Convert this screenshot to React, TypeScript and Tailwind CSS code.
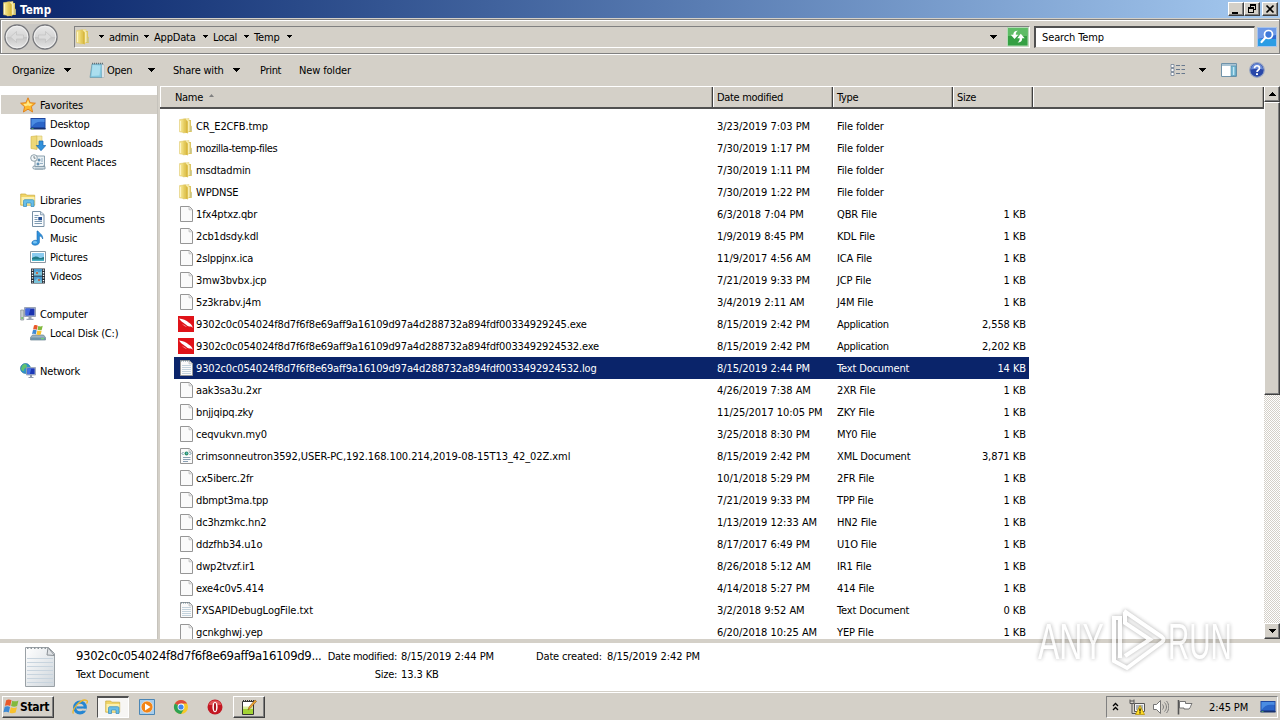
import type { ReactNode } from "react";

type Kind = "folder" | "file" | "falcon" | "text" | "xml";
type Row = [Kind, string, string, string, string];

const rows: Row[] = [
  ["folder", "CR_E2CFB.tmp", "3/23/2019 7:03 PM", "File folder", ""],
  ["folder", "mozilla-temp-files", "7/30/2019 1:17 PM", "File folder", ""],
  ["folder", "msdtadmin", "7/30/2019 1:11 PM", "File folder", ""],
  ["folder", "WPDNSE", "7/30/2019 1:22 PM", "File folder", ""],
  ["file", "1fx4ptxz.qbr", "6/3/2018 7:04 PM", "QBR File", "1 KB"],
  ["file", "2cb1dsdy.kdl", "1/9/2019 8:45 PM", "KDL File", "1 KB"],
  ["file", "2slppjnx.ica", "11/9/2017 4:56 AM", "ICA File", "1 KB"],
  ["file", "3mw3bvbx.jcp", "7/21/2019 9:33 PM", "JCP File", "1 KB"],
  ["file", "5z3krabv.j4m", "3/4/2019 2:11 AM", "J4M File", "1 KB"],
  ["falcon", "9302c0c054024f8d7f6f8e69aff9a16109d97a4d288732a894fdf00334929245.exe", "8/15/2019 2:42 PM", "Application", "2,558 KB"],
  ["falcon", "9302c0c054024f8d7f6f8e69aff9a16109d97a4d288732a894fdf0033492924532.exe", "8/15/2019 2:42 PM", "Application", "2,202 KB"],
  ["text", "9302c0c054024f8d7f6f8e69aff9a16109d97a4d288732a894fdf0033492924532.log", "8/15/2019 2:44 PM", "Text Document", "14 KB"],
  ["file", "aak3sa3u.2xr", "4/26/2019 7:38 AM", "2XR File", "1 KB"],
  ["file", "bnjjqipq.zky", "11/25/2017 10:05 PM", "ZKY File", "1 KB"],
  ["file", "ceqvukvn.my0", "3/25/2018 8:30 PM", "MY0 File", "1 KB"],
  ["xml", "crimsonneutron3592,USER-PC,192.168.100.214,2019-08-15T13_42_02Z.xml", "8/15/2019 2:42 PM", "XML Document", "3,871 KB"],
  ["file", "cx5iberc.2fr", "10/1/2018 5:29 PM", "2FR File", "1 KB"],
  ["file", "dbmpt3ma.tpp", "7/21/2019 9:33 PM", "TPP File", "1 KB"],
  ["file", "dc3hzmkc.hn2", "1/13/2019 12:33 AM", "HN2 File", "1 KB"],
  ["file", "ddzfhb34.u1o", "8/17/2017 6:49 PM", "U1O File", "1 KB"],
  ["file", "dwp2tvzf.ir1", "8/26/2018 5:12 AM", "IR1 File", "1 KB"],
  ["file", "exe4c0v5.414", "4/14/2018 5:27 PM", "414 File", "1 KB"],
  ["text", "FXSAPIDebugLogFile.txt", "3/2/2018 9:52 AM", "Text Document", "0 KB"],
  ["file", "gcnkghwj.yep", "6/20/2018 10:25 AM", "YEP File", "1 KB"],
];

function Svg({ s = 16, children, className = "" }: { s?: number; children: ReactNode; className?: string }) {
  return (
    <svg width={s} height={s} viewBox="0 0 16 16" className={`shrink-0 ${className}`}>
      {children}
    </svg>
  );
}

function Caret({ className = "" }: { className?: string }) {
  return (
    <svg width="7" height="4" viewBox="0 0 7 4" className={`shrink-0 ${className}`} shapeRendering="crispEdges">
      <path d="M0 0h7L3.5 4z" fill="#000" />
    </svg>
  );
}

function SmallCaret({ className = "" }: { className?: string }) {
  return (
    <svg width="5" height="3" viewBox="0 0 5 3" className={`shrink-0 ${className}`} shapeRendering="crispEdges">
      <path d="M0 0h5L2.5 3z" fill="#000" />
    </svg>
  );
}

function Folder({ s = 16 }: { s?: number }) {
  return (
    <Svg s={s}>
      <defs>
        <linearGradient id="fold" x1="0" x2="1" y1="0" y2="0">
          <stop offset="0" stopColor="#f7e89a" />
          <stop offset="0.5" stopColor="#eeda78" />
          <stop offset="1" stopColor="#dfc24c" />
        </linearGradient>
      </defs>
      <path d="M5 1.2l6-.8v13.500L5 15z" fill="#f7eba8" stroke="#e2cf74" strokeWidth=".5" />
      <path d="M11 2h2v5.500l.8.8V14H11z" fill="#dcc664" />
      <path d="M1.500 1.600L7.500.8v14l-6-1z" fill="url(#fold)" stroke="#dcc566" strokeWidth=".5" />
      <path d="M7.500 1.200l2.300 2.200v12.100L7.500 14.500z" fill="#d9b93f" />
      <path d="M2.600 3v10M11 3v10" stroke="#fff8d0" strokeWidth=".9" />
      <path d="M13 9v4" stroke="#b4c4b0" strokeWidth=".8" />
    </Svg>
  );
}

function FileIcon({ kind }: { kind: Kind }) {
  if (kind === "folder") return <Folder />;
  if (kind === "falcon")
    return (
      <Svg>
        <path d="M0 0h16v16H0z" fill="#e01319" />
        <path d="M1 2.500c4 .2 7 1.700 10 4.300 1.600 1.200 3 2 3.800 5-1.300-1.300-2.300-1.500-3.300-1.200-1.500-.2-3-1.600-4.500-2.700C5 6.500 2.700 5.100 1 2.500z" fill="#fff" />
        <path d="M4 7.500c1.500 1.500 3.500 2 5 3.200-2-.1-4-1.100-5-3.200z" fill="#f7b6b7" />
      </Svg>
    );
  return (
    <Svg>
      <path d="M2.500.5h9l3 3v12h-12z" fill="#fafafa" stroke="#969696" />
      <path d="M11 .8v3h3.200" fill="#e4e4e4" stroke="#bdbdbd" strokeWidth=".8" />
      {kind === "text" && (
        <>
          <path d="M4 5.500h9M4 7.500h9M4 9.500h9M4 11.500h9M4 13.500h9" stroke="#c3d2dc" />
          <path d="M3 .8h9" stroke="#6e8795" strokeWidth="1.300" strokeDasharray="1 1" />
        </>
      )}
      {kind === "xml" && (
        <>
          <path d="M5.500 4L4 5.500 5.500 7M11.500 4L13 5.500 11.500 7" fill="none" stroke="#4f7d92" strokeWidth=".9" />
          <circle cx="8.500" cy="5.500" r="2" fill="#2f9168" />
          <circle cx="8.700" cy="5.200" r=".8" fill="#63bde0" />
          <path d="M5 9.500h7.500M5 11.500h7.500M5 13.500h5" stroke="#8aa0b4" />
        </>
      )}
    </Svg>
  );
}

const Star = () => (
  <Svg>
    <path d="M8 .8l2.100 4.900 5.300.5-4 3.500 1.200 5.300L8 12.200 3.400 15l1.200-5.300-4-3.500 5.300-.5z" fill="#fdb92e" stroke="#e07d16" strokeWidth=".9" />
    <path d="M8 3l1.300 3.600 3.200.4-2.600 2L8 8.500 5 9.300 3.400 7.100l3.200-.4z" fill="#ffe787" />
  </Svg>
);
const Desktop = () => (
  <Svg>
    <path d="M.5 2h15v11H.5z" fill="#1f479f" />
    <path d="M1.500 3h13v8h-13z" fill="#2b65c8" />
    <path d="M1.500 11c3-5 7-6 13-5V3h-13z" fill="#4b8ce2" />
    <path d="M.5 12h15v1.500H.5z" fill="#17316d" />
    <path d="M1.500 12.300h2v.8h-2z" fill="#65c564" />
  </Svg>
);
const Downloads = () => (
  <Svg>
    <path d="M1 1.500L7 .8v13.700L1 13.500z" fill="#eed877" stroke="#d2b64c" strokeWidth=".6" />
    <path d="M7 1h5v12H7z" fill="#f5e8a4" stroke="#d9c263" strokeWidth=".6" />
    <path d="M9 6h4v4.500h2.800L11 15.700 6.300 10.500H9z" fill="#3191dc" stroke="#1a69b0" strokeWidth=".7" />
  </Svg>
);
const Recent = () => (
  <Svg>
    <path d="M5 2h9.500v10H13v3H4c-1.500 0-1.700-3 0-3h1z" fill="#e9f0f4" stroke="#7f96a5" strokeWidth=".9" />
    <path d="M4.500 12.500H15V15H5" fill="#cfdbe2" stroke="#7f96a5" strokeWidth=".9" />
    <path d="M8 5h2v2H8zM11 5h2M11 7h2M7 9h2v2H7zM10 9.500h3" fill="#6d9fc4" stroke="#5f87a5" strokeWidth=".6" />
    <circle cx="4" cy="4" r="3.300" fill="#f4f8fa" stroke="#8698a2" strokeWidth=".9" />
    <path d="M4 2v2.200h1.600" fill="none" stroke="#5e6c74" strokeWidth=".8" />
  </Svg>
);
const Libraries = () => (
  <Svg>
    <path d="M.7 3V2h5l1 1.200h8v10h-14z" fill="#f1d566" stroke="#c9a93a" strokeWidth=".7" />
    <path d="M1.500 5h13v7.500h-13z" fill="#fbf0af" />
    <path d="M3.500 14.500V9.200c0-1 .5-1.500 1.500-1.500h7.500c1 0 1.500.5 1.500 1.500v5.300h-3v-3.500H6.500v3.500z" fill="#68bee9" stroke="#3489b9" strokeWidth=".7" />
  </Svg>
);
const Documents = () => (
  <Svg>
    <path d="M2.500.5h8l3.500 3v12H2.500z" fill="#fbfdff" stroke="#7890a5" />
    <path d="M10.500.8v3H14" fill="#d9e4ee" stroke="#7890a5" strokeWidth=".8" />
    <path d="M4.500 4.500h4M4.500 6.500h3M4.500 8.500h3M4.500 10.500h7.500M4.500 12.500h7.500" stroke="#7f9bb2" />
    <path d="M8.300 6h3.700v3.300H8.300z" fill="#234e91" />
  </Svg>
);
const Music = () => (
  <Svg>
    <path d="M8 1c1 2.500 5 3 4.700 8-.7-2-1.700-2.800-3.300-3v6.300c-.2 3.500-7.600 4-7.600.7C2 10.300 5.500 9.800 7 10.600V1z" fill="#2f92dc" stroke="#1769b1" strokeWidth=".6" />
    <ellipse cx="5" cy="12.300" rx="2" ry="1.300" fill="#7ac4f2" />
  </Svg>
);
const Pictures = () => (
  <Svg>
    <path d="M.5 2.500h15v11H.5z" fill="#fff" stroke="#8b98a3" />
    <path d="M2 4h12v8H2z" fill="#8bcbf0" />
    <path d="M2 9c3-2 5-2 7-.5S12 8 14 8v4H2z" fill="#227a87" />
    <path d="M2 10.500h12V12H2z" fill="#4bb4c9" />
  </Svg>
);
const Videos = () => (
  <Svg>
    <path d="M1 .5h14v15H1z" fill="#252d36" />
    <path d="M4 1h8v6.500H4zM4 8.500h8V15H4z" fill="#4b9bd0" />
    <path d="M4 5l3-2 2 1.500L12 3v4.500H4zM4 13l4-3 4 3v2H4z" fill="#7bc3d9" />
    <path d="M6 4h2v2H6zM8 11h2v2H8z" fill="#b66c56" />
    <path d="M2.500 1.500V15M13.500 1.500V15" stroke="#fff" strokeWidth="1.400" strokeDasharray="1.300 1.300" />
  </Svg>
);
const Computer = () => (
  <Svg>
    <path d="M.7 4h3v10h-3z" fill="#c7ced0" stroke="#7e8a8c" strokeWidth=".7" />
    <path d="M1.500 11h1.200v2H1.500z" fill="#5cbc53" />
    <path d="M4.500 1.500h11v9h-11z" fill="#c9d0dc" stroke="#8792a7" strokeWidth=".8" />
    <path d="M5.500 2.500h9v7h-9z" fill="#1b34b0" />
    <path d="M5.500 2.500h5l-2 7h-3z" fill="#3f66e2" />
    <path d="M8.500 11h3v2h-3zM6.500 12.800h7v1.200h-7z" fill="#9aa4b5" />
  </Svg>
);

const FlagShape = () => (
  <>
    <path d="M3 2c2-1 3.500-.7 5 .2L6.800 7.500c-1.500-.8-3-1-5-.1z" fill="#e9592a" />
    <path d="M8.700 2.500c2 .9 3.700.9 5.800-.2l-1.200 5.200c-2 1-3.700.9-5.700.1z" fill="#82b93d" />
    <path d="M1.600 8.300c2-.9 3.500-.7 5 .1l-1.200 5.200c-1.600-.8-3-.9-5-.1z" fill="#3e8ad4" />
    <path d="M7.400 8.700c1.900.8 3.600.9 5.700-.1l-1.200 5.100c-2 1-3.700.9-5.700.2z" fill="#f8c12d" />
  </>
);
const Disk = () => (
  <Svg>
    <path d="M2.500 10h11l2 2.500V15H.5v-2.500z" fill="#9eb3c0" stroke="#698190" strokeWidth=".7" />
    <path d="M1 12.500h14V15H1z" fill="#6f94a9" />
    <path d="M11 13.200h3v1h-3z" fill="#72e06d" />
    <g transform="translate(1.700 -1) scale(.76)">
      <FlagShape />
    </g>
  </Svg>
);
const NetworkIcon = () => (
  <Svg>
    <circle cx="5.500" cy="5.500" r="5" fill="#2f93c9" stroke="#1a6a92" strokeWidth=".6" />
    <path d="M2 3c2-3 5-2 5 0S4 5 4 7s-2 1-3-1zM6 7l3-1 1 2-3 2z" fill="#5fc26e" />
    <path d="M6.500 4.500h9v7.500h-9z" fill="#c9d0dc" stroke="#8792a7" strokeWidth=".7" />
    <path d="M7.300 5.300h7.400v5.900H7.300z" fill="#1b38b8" />
    <path d="M7.300 5.300h4l-1.500 5.900H7.300z" fill="#4470e6" />
    <path d="M10 12h2v2h-2zM8.500 14h5v1h-5z" fill="#8f9aab" />
  </Svg>
);

type Nav = { icon: ReactNode; label: string; root?: boolean; active?: boolean } | null;
const nav: Nav[] = [
  { icon: <Star />, label: "Favorites", root: true, active: true },
  { icon: <Desktop />, label: "Desktop" },
  { icon: <Downloads />, label: "Downloads" },
  { icon: <Recent />, label: "Recent Places" },
  null,
  { icon: <Libraries />, label: "Libraries", root: true },
  { icon: <Documents />, label: "Documents" },
  { icon: <Music />, label: "Music" },
  { icon: <Pictures />, label: "Pictures" },
  { icon: <Videos />, label: "Videos" },
  null,
  { icon: <Computer />, label: "Computer", root: true },
  { icon: <Disk />, label: "Local Disk (C:)" },
  null,
  { icon: <NetworkIcon />, label: "Network", root: true },
];

const raised = "border border-t-white border-l-white border-r-[#404040] border-b-[#404040] bg-[#d4d0c8] shadow-[inset_-1px_-1px_0_#808080]";

function TitleBar() {
  return (
    <header className="flex h-[18px] shrink-0 items-center bg-linear-to-r from-[#0a246a] to-[#a6caf0] pr-[2px] pl-[2px]">
      <Folder />
      <b className="ml-[2px] grow pt-px text-[11.5px] tracking-[0.1px] text-white">Temp</b>
      <div className={`h-[14px] w-4 ${raised}`}>
        <svg width="14" height="12" shapeRendering="crispEdges"><path d="M3 9h6v2H3z" /></svg>
      </div>
      <div className={`h-[14px] w-4 ${raised}`}>
        <svg width="14" height="12" fill="none" stroke="#000" shapeRendering="crispEdges">
          <path d="M5 1.500h6M5 2.500h6M5.500 1v3M10.500 1v6M9 6.500h2M3 4.500h6M3 5.500h6M3.500 4v6M8.500 4v6M3 9.500h6" />
        </svg>
      </div>
      <div className={`ml-[2px] h-[14px] w-4 ${raised}`}>
        <svg width="14" height="12"><path d="M3.500 2.500l7 7M10.500 2.500l-7 7" stroke="#000" strokeWidth="1.700" /></svg>
      </div>
    </header>
  );
}

function NavButton({ flip = false }: { flip?: boolean }) {
  return (
    <svg width="26" height="26" viewBox="0 0 26 26" className="shrink-0">
      <defs>
        <linearGradient id="nb" x1="0" x2="0" y1="0" y2="1">
          <stop offset="0" stopColor="#e9e9e9" />
          <stop offset=".48" stopColor="#d6d6d6" />
          <stop offset=".52" stopColor="#c6c6c6" />
          <stop offset="1" stopColor="#e8e8e8" />
        </linearGradient>
      </defs>
      <circle cx="13" cy="13" r="12" fill="url(#nb)" stroke="#77787c" strokeWidth="1.300" />
      <circle cx="13" cy="13" r="10.800" fill="none" stroke="#f3f3f3" strokeWidth=".9" />
      <path d="M6.500 13l6-5.500v3.500h7v4h-7v3.500z" fill="#dcdcdc" stroke="#c2c2c2" strokeWidth=".7" transform={flip ? "matrix(-1 0 0 1 26 0)" : undefined} />
    </svg>
  );
}

function AddressBar() {
  return (
    <div className="mt-px flex h-[35px] shrink-0 items-center border border-[#808080] pl-[3px] shadow-[inset_1px_1px_0_#fff,0_1px_0_#fff]">
      <div className="flex w-[54px] shrink-0 gap-[2px] rounded-full bg-[#cac8c4]">
        <NavButton />
        <NavButton flip />
      </div>
      <div className="ml-[16px] flex h-[22px] w-[956px] shrink-0 items-center border border-t-[#808080] border-r-white border-b-white border-l-[#808080]">
        <div className="flex w-[23px] justify-start"><Folder /></div>
        <SmallCaret className="ml-px" />
        <span className="ml-[5px] w-[28px] whitespace-nowrap">admin</span>
        <SmallCaret className="ml-[7px]" />
        <span className="ml-[5px] w-[44px] tracking-[-0.2px] whitespace-nowrap">AppData</span>
        <SmallCaret className="ml-[5px]" />
        <span className="ml-[5px] w-[25px] whitespace-nowrap">Local</span>
        <SmallCaret className="ml-[6px]" />
        <span className="ml-[5px] w-[27px] tracking-[-0.1px] whitespace-nowrap">Temp</span>
        <SmallCaret className="ml-[6px]" />
        <Caret className="mr-[10px] ml-auto" />
        <svg width="22" height="20" viewBox="0 0 22 20" className="shrink-0">
          <path d="M.5.500h20.500v18.500H.5z" fill="#35a043" stroke="#b4dcb6" />
          <path d="M1 1h19.500v8H1z" fill="#5fbc66" />
          <path d="M7.500 12L3.800 7.800h2.500c0-2.500 1.500-4 4.500-4-1.500 1-2 2-2 4h2.500zM13.800 6.800l3.900 4.400h-2.500c0 3-1.500 4.300-4.700 4.300 1.500-1.100 2.200-2 2.200-4.300h-2.500z" fill="#fff" />
        </svg>
      </div>
      <div className="ml-[4px] flex h-[22px] w-[221px] shrink-0 items-center border border-t-2 border-l-2 border-t-[#505050] border-r-[#d4d0c8] border-b-[#d4d0c8] border-l-[#505050] bg-white pl-[6px]">
        <span className="tracking-[-0.12px]">Search Temp</span>
      </div>
      <svg width="20" height="20" viewBox="0 0 20 20" className="ml-[2px] shrink-0">
        <path d="M.5.500h19v19H.5z" fill="#3069d0" stroke="#a8c4ea" />
        <path d="M1 12h18v7H1z" fill="#2b9ce4" />
        <path d="M1 1h18v7L1 12z" fill="#6c98e6" />
        <circle cx="11.500" cy="7.500" r="4" fill="#3f79da" stroke="#fff" strokeWidth="1.700" />
        <path d="M8.500 10.500L4.500 15" stroke="#fff" strokeWidth="2.200" strokeLinecap="round" />
      </svg>
    </div>
  );
}

function Toolbar() {
  return (
    <div className="flex h-[32px] shrink-0 items-center pl-3">
      <span className="w-[52px] tracking-[-0.2px]">Organize</span>
      <Caret />
      <Svg className="ml-[18px]">
        <path d="M3 2h11l-1 13.500H1z" fill="#82c7df" stroke="#6996a9" strokeWidth=".7" />
        <path d="M13 2l2 1v12.500h-2z" fill="#f3f8fa" stroke="#96a5ad" strokeWidth=".5" />
        <path d="M3.500 3l8 .5-1 10-8 .5z" fill="#abdeee" />
        <path d="M3 1.500h11" stroke="#637178" strokeWidth="1.500" strokeDasharray="1 1" />
      </Svg>
      <span className="ml-[2px] w-[41px]">Open</span>
      <Caret />
      <span className="ml-[18px] w-[60px] tracking-[-0.2px]">Share with</span>
      <Caret />
      <span className="ml-[20px] w-[39px]">Print</span>
      <span className="grow tracking-[-0.15px]">New folder</span>
      <Svg>
        <path d="M1 2.500h3v3H1zM1 6.500h3v3H1zM1 10.500h3v3H1z" fill="#fff" stroke="#6f7f94" strokeWidth=".8" />
        <path d="M6 3.500h4M11.500 3.500H15M6 7.500h4M11.500 7.500H15M6 11.500h4M11.500 11.500H15" stroke="#67788d" />
      </Svg>
      <Caret className="ml-[13px]" />
      <Svg className="ml-[15px]">
        <path d="M.5 1.500h15v13H.5z" fill="#fff" stroke="#6f92a9" />
        <path d="M1 2h14v2H1z" fill="#a9c4d4" />
        <path d="M10 4h5v10h-5z" fill="#78bad5" stroke="#4f8eaa" strokeWidth=".6" />
        <path d="M12.700 5v8" stroke="#d6f1fa" />
      </Svg>
      <Svg className="mr-[15px] ml-[12px]">
        <circle cx="8" cy="8" r="7.300" fill="#2847a9" stroke="#98a6c4" strokeWidth="1.200" />
        <path d="M2 7.500a6 6 0 0112 0c-3-1-8-1-12 0z" fill="#6a8bd8" />
        <path d="M5.500 6.200c0-3.300 5-3.200 5 0C10.500 8 8 8 8 10" fill="none" stroke="#fff" strokeWidth="1.700" />
        <path d="M7 11.300h2v1.700H7z" fill="#fff" />
      </Svg>
    </div>
  );
}

function Sidebar() {
  return (
    <aside className="flex w-[157px] shrink-0 flex-col bg-white pt-[9px] tracking-[-0.18px]">
      {nav.map((n, i) =>
        n ? (
          <div key={i} className={`ml-px flex h-[19px] shrink-0 items-center gap-1 ${n.root ? "pl-[19px]" : "pl-[29px]"} ${n.active ? "bg-[#d4d0c8]" : ""}`}>
            {n.icon}
            <span>{n.label}</span>
          </div>
        ) : (
          <div key={i} className="h-[19px] shrink-0" />
        )
      )}
    </aside>
  );
}

const head = "flex h-full items-center border-r border-r-[#404040] border-l border-l-white shadow-[inset_-1px_0_0_#a5a29b]";

function nameTracking(name: string) {
  if (name.startsWith("9302")) return "tracking-[-0.15px]";
  if (name.startsWith("crimson")) return "tracking-[-0.08px]";
  if (name.startsWith("FXS")) return "tracking-[-0.05px]";
  return name.includes("-") ? "tracking-[-0.4px]" : "tracking-[-0.15px]";
}

function FileList() {
  return (
    <main className="flex w-[1104px] shrink-0 flex-col overflow-hidden bg-white">
      <div className="flex h-[23px] shrink-0 border-t border-b-2 border-t-white border-b-[#505050] bg-[#d4d0c8]">
        <div className={`w-[553px] pl-[14px] ${head}`}>
          <span>Name</span>
          <svg width="5" height="3" className="mb-[3px] ml-[6px]"><path d="M0 3h5L2.500 0z" fill="#808080" /></svg>
        </div>
        <div className={`w-[120px] pl-[3px] ${head}`}><span>Date modified</span></div>
        <div className={`w-[120px] pl-[3px] ${head}`}><span>Type</span></div>
        <div className={`w-[80px] pl-[3px] ${head}`}><span>Size</span></div>
        <div className={`grow ${head}`} />
      </div>
      <div className="mt-[6px] flex flex-col pl-[14px]">
        {rows.map((r, i) => (
          <div key={i} className={`flex h-[22px] w-[855px] shrink-0 items-center whitespace-nowrap ${i === 11 ? "bg-[#0a246a] text-white" : ""}`}>
            <div className="flex w-[543px] items-center pl-1">
              <FileIcon kind={r[0]} />
              <span className={`ml-[2px] ${nameTracking(r[1])}`}>{r[1]}</span>
            </div>
            <span className="w-[120px] tracking-[-0.04px]">{r[2]}</span>
            <span className={`w-[110px] ${r[3] === "Application" ? "" : "tracking-[-0.15px]"}`}>{r[3]}</span>
            <span className="grow pr-[3px] text-right tracking-[-0.08px]">{r[4]}</span>
          </div>
        ))}
      </div>
    </main>
  );
}

function ScrollBar() {
  return (
    <div className="flex w-4 shrink-0 flex-col bg-[repeating-conic-gradient(#fff_0_25%,#d4d0c8_0_50%)] bg-size-[2px_2px]">
      <div className={`flex h-[16px] items-center justify-center ${raised}`}><Caret className="rotate-180" /></div>
      <div className={`h-[293px] ${raised}`} />
      <div className="grow" />
      <div className={`flex h-4 items-center justify-center ${raised}`}><Caret /></div>
    </div>
  );
}

function Details() {
  return (
    <section className="flex h-[49px] shrink-0 bg-white">
      <svg width="32" height="42" viewBox="0 0 32 42" className="mt-[3px] ml-6 shrink-0">
        <defs>
          <linearGradient id="page" x1="0" x2="1" y1="0" y2="1">
            <stop offset="0" stopColor="#fff" />
            <stop offset="1" stopColor="#cfd6dc" />
          </linearGradient>
        </defs>
        <path d="M1.500 1.500h23l6 6v33h-29z" fill="url(#page)" stroke="#9aa1a6" />
        <path d="M24 1.500l-1 7.500 7.500.500z" fill="#dfe2e5" stroke="#8b9196" />
        <path d="M3 12.500h26M3 16.500h26M3 20.500h26M3 24.500h26M3 28.500h26M3 32.500h26M3 36.500h26" stroke="#c8d4de" />
        <path d="M3 2h20" stroke="#8f979c" strokeWidth="2" strokeDasharray="1.500 2" />
      </svg>
      <div className="mt-[5px] ml-[20px] w-[250px] whitespace-nowrap">
        <div className="h-[18px] text-[13px] leading-[16px] tracking-[-0.36px]">9302c0c054024f8d7f6f8e69aff9a16109d9...</div>
        <div className="h-[18px] leading-[18px] tracking-[-0.1px]">Text Document</div>
      </div>
      <div className="mt-[5px] w-[210px] leading-[18px] tracking-[-0.3px] whitespace-nowrap">
        <div className="flex"><div className="w-[71px] text-right">Date modified:</div><div className="ml-1 tracking-[-0.04px]">8/15/2019 2:44 PM</div></div>
        <div className="flex"><div className="w-[71px] text-right">Size:</div><div className="ml-1 tracking-[-0.1px]">13.3 KB</div></div>
      </div>
      <div className="mt-[5px] flex leading-[18px] whitespace-nowrap"><div className="w-[67px] tracking-[-0.15px]">Date created:</div><div className="ml-1 tracking-[-0.04px]">8/15/2019 2:42 PM</div></div>
    </section>
  );
}

function TaskBar() {
  return (
    <footer className="flex h-[28px] shrink-0 items-center border-t border-white bg-[#d4d0c8] shadow-[0_-1px_0_#d4d0c8]">
      <button className={`ml-[2px] flex h-[22px] w-[52px] items-center ${raised}`}>
        <Svg s={17}><FlagShape /></Svg>
        <b className="text-[12px] tracking-[-0.3px]">Start</b>
      </button>
      <Svg className="ml-[18px]">
        <circle cx="8" cy="8.500" r="5.300" fill="none" stroke="#2586d2" strokeWidth="3.200" />
        <path d="M4.500 8.500h9" stroke="#2586d2" strokeWidth="2.200" />
        <path d="M10.500 9.700h4v2h-4z" fill="#d4d0c8" />
        <path d="M1.500 14.500C-1.500 12 9-1.500 14.800 1.500c1 .8.500 2-.3 3" fill="none" stroke="#eab62b" strokeWidth="1.300" />
      </Svg>
      <div className="ml-[9px] flex h-[22px] w-8 items-center justify-center border border-t-2 border-t-[#505050] border-r-white border-b-white border-l-[#505050] bg-[#f7f6f4]"><Libraries /></div>
      <Svg className="ml-[10px]">
        <path d="M.5.500h15v15H.5z" fill="#a7cdec" stroke="#4b86b5" />
        <circle cx="8" cy="8" r="5.900" fill="#f28416" stroke="#fff" strokeWidth=".5" />
        <path d="M6 4.500l5.500 3.500L6 11.500z" fill="#fff" />
      </Svg>
      <Svg className="ml-[18px]">
        <circle cx="8" cy="8" r="7" fill="#f6c928" />
        <path d="M8 8L1.900 4.500A7 7 0 0114.100 4.500H8z" fill="#dd4b3e" />
        <path d="M8 8L1.900 4.500A7 7 0 008 15l3-5z" fill="#2da253" />
        <circle cx="8" cy="8" r="3.400" fill="#fff" />
        <circle cx="8" cy="8" r="2.600" fill="#4086ec" />
      </Svg>
      <Svg className="ml-[18px]">
        <circle cx="8" cy="8" r="7.500" fill="#c31722" />
        <path d="M1.500 6a7 7 0 0113 0z" fill="#df5357" />
        <ellipse cx="8" cy="8" rx="2.600" ry="5.300" fill="#fff" />
        <ellipse cx="8" cy="8" rx="1.100" ry="4.300" fill="#a9121c" />
      </Svg>
      <div className={`ml-[10px] flex h-[22px] w-8 items-center justify-center ${raised}`}>
        <Svg>
          <path d="M1.500 2.500h11v13h-11z" fill="#fff" stroke="#333" />
          <path d="M2 9.500h10V15H2z" fill="#a3d334" />
          <path d="M2 7.500h10v2H2z" fill="#dbed9b" />
          <path d="M2 2h11" stroke="#333" strokeWidth="2" strokeDasharray="1 1" />
          <path d="M7 11l1-3 6-7 1.500 1.300-6.200 7z" fill="#f0a72c" stroke="#87501d" strokeWidth=".6" />
        </Svg>
      </div>
      <div className="mr-[2px] ml-auto flex h-[22px] w-[172px] items-center border border-t-[#808080] border-r-white border-b-white border-l-[#808080]">
        <svg width="7" height="9" viewBox="0 0 7 9" className="ml-[5px]" fill="none" stroke="#000" strokeWidth="1.300"><path d="M1 4l2.500-2.500L6 4M1 8l2.500-2.500L6 8" /></svg>
        <Svg className="ml-[10px]">
          <path d="M5.500 4.500h10v8h-10z" fill="#f3f3f3" stroke="#555" />
          <path d="M7 6h7v5H7z" fill="#aab0b5" />
          <path d="M1 .5v4h4v-4M3 4.500v10M3 14.500h6M2 1v2M4 1v2" fill="none" stroke="#555" />
          <path d="M11 6.500l4.500 9h-9z" fill="#ffdc28" stroke="#b28c00" strokeWidth=".7" />
          <path d="M11 9.500v3M11 13.300v1.200" stroke="#000" strokeWidth="1.200" />
        </Svg>
        <Svg className="ml-[8px]">
          <path d="M.5 5.500h3l4-4v13l-4-4h-3z" fill="#fff" stroke="#666" strokeWidth=".9" />
          <path d="M9.500 5.500c1.300 1.500 1.300 3.500 0 5M11.500 3.500c2.600 2.600 2.600 6.400 0 9M13.500 2c3 3.500 3 8.500 0 12" fill="none" stroke="#7a7a7a" strokeWidth="1" />
        </Svg>
        <Svg className="ml-[8px]">
          <path d="M1.500 1v14.500" stroke="#555" strokeWidth="1.600" />
          <path d="M2.500 2.500h6v2h6.500c-1.500 2-1 3.500-3 5.500h-5V9H2.500z" fill="#fff" stroke="#666" strokeWidth=".9" />
        </Svg>
        <span className="ml-[16px] w-[42px] tracking-[-0.1px] whitespace-nowrap">2:45 PM</span>
        <div className="ml-[9px]"><Desktop /></div>
      </div>
    </footer>
  );
}

function Watermark() {
  return (
    <div className="pointer-events-none absolute top-[607px] left-[1038px] flex h-[66px] w-[196px] items-center opacity-80 drop-shadow-[0_0_2px_rgba(0,0,0,0.4)]">
      <div className="w-[72px] origin-left scale-x-[.64] pt-[3px] font-['Liberation_Sans'] text-[50px] leading-none tracking-normal text-white">ANY</div>
      <svg width="56" height="66" viewBox="0 0 56 66" fill="none" stroke="#fff" strokeWidth="4" className="shrink-0">
        <path d="M14 4l38 26c2 1.500 2 3.500 0 5L17 61l-13-7V11h6v40M15 5v11l25 16.500L15 49" />
      </svg>
      <div className="ml-[2px] w-[66px] origin-left scale-x-[.59] pt-[3px] font-['Liberation_Sans'] text-[50px] leading-none tracking-normal text-white">RUN</div>
    </div>
  );
}

export default function App() {
  return (
    <div className="relative flex h-[720px] w-[1280px] flex-col overflow-hidden bg-[#d4d0c8] font-['DejaVu_Sans_Condensed','DejaVu_Sans',sans-serif] text-[11px] leading-[14px] tracking-[-0.32px] text-black [&_span]:pt-[2px]">
      <TitleBar />
      <AddressBar />
      <Toolbar />
      <div className="flex h-[553px] shrink-0">
        <Sidebar />
        <div className="w-[3px] shrink-0 border-l border-l-[#c6c3bc] bg-[#d4d0c8]" />
        <FileList />
        <ScrollBar />
      </div>
      <div className="h-[4px] shrink-0" />
      <Details />
      <TaskBar />
      <Watermark />
    </div>
  );
}
